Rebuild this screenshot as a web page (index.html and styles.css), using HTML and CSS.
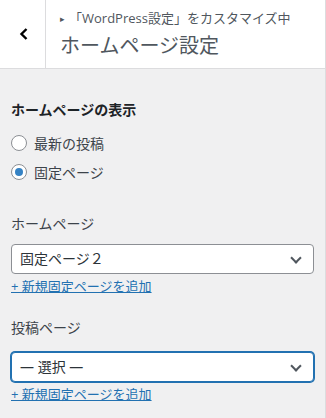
FILE: index.html
```html
<!DOCTYPE html>
<html lang="ja">
<head>
  <meta charset="UTF-8" />
  <title>ホームページ設定</title>
  <link rel="stylesheet" href="styles.css">
</head>
<body>
  <div class="panel">
    <div class="panel-header">
      <button class="back" aria-label="戻る">
        <svg width="10" height="14" viewBox="0 0 10 14"><polyline points="7.5,2 2.5,7 7.5,12" fill="none" stroke="#000" stroke-width="2.4"/></svg>
      </button>
      <div class="titles">
        <div class="crumb"><span class="arrow">&#9656;</span>「WordPress設定」をカスタマイズ中</div>
        <h2 class="title">ホームページ設定</h2>
      </div>
    </div>

    <div class="section">
      <h3 class="label heading">ホームページの表示</h3>
      <label class="radio"><span class="dot"></span>最新の投稿</label>
      <label class="radio"><span class="dot checked"></span>固定ページ</label>
    </div>

    <div class="section">
      <h3 class="label front">ホームページ</h3>
      <div class="select">固定ページ２<span class="caret"></span></div>
      <a class="add" href="#">+ 新規固定ページを追加</a>
    </div>

    <div class="section">
      <h3 class="label posts">投稿ページ</h3>
      <div class="select focus">— 選択 —<span class="caret"></span></div>
      <a class="add" href="#">+ 新規固定ページを追加</a>
    </div>
  </div>
</body>
</html>
```

FILE: styles.css
```css
body {
  margin: 0;
  background: #f0f0f1;
  font-family: "Open Sans", "Noto Sans CJK JP", sans-serif;
  color: #1d2327;
  font-size: 13px;
}

.panel {
  width: 325px;
  height: 418px;
  border-right: 1px solid #dcdcde;
  overflow: hidden;
}

.panel-header {
  display: flex;
  height: 68px;
  background: #fff;
  border-bottom: 1px solid #dcdcde;
}

.back {
  width: 46px;
  border: none;
  border-right: 1px solid #dcdcde;
  background: #fff;
  padding: 0 0 0 2px;
  display: flex;
  align-items: center;
  justify-content: center;
}

.titles {
  padding: 8px 0 0 14px;
  color: #50575e;
}

.crumb {
  font-size: 13px;
  line-height: 20px;
}

.arrow {
  font-size: 9px;
  margin-right: 4px;
  position: relative;
  top: -1px;
}

.title {
  margin: 3px 0 0;
  font-size: 20px;
  font-weight: 400;
  line-height: 26px;
}

.section {
  padding: 0 11px;
}

.label {
  margin: 0;
  font-size: 14px;
  line-height: 20px;
  font-weight: 400;
  color: #3c434a;
}

.label.heading {
  font-weight: 600;
  color: #1d2327;
  padding-top: 31px;
  margin-bottom: 8px;
}

.label.front {
  padding-top: 28px;
  margin-bottom: 10px;
}

.label.posts {
  padding-top: 23px;
  margin-bottom: 14px;
}

.radio {
  display: flex;
  align-items: center;
  gap: 7px;
  height: 29px;
  font-size: 14px;
  color: #3c434a;
}

.dot {
  width: 14px;
  height: 14px;
  border: 1px solid #8c8f94;
  border-radius: 50%;
  background: #fff;
  display: flex;
  align-items: center;
  justify-content: center;
}

.dot.checked::after {
  content: "";
  width: 8px;
  height: 8px;
  border-radius: 50%;
  background: #3582c4;
}

.select {
  position: relative;
  height: 28px;
  line-height: 28px;
  border: 1px solid #8c8f94;
  border-radius: 4px;
  background: #fff;
  padding-left: 8px;
  font-size: 14px;
  color: #2c3338;
}

.select.focus {
  border-color: #2271b1;
  box-shadow: 0 0 0 1px #2271b1;
}

.caret {
  position: absolute;
  right: 13px;
  top: 9px;
  width: 6px;
  height: 6px;
  border-right: 2px solid #50575e;
  border-bottom: 2px solid #50575e;
  transform: rotate(45deg);
}

.add {
  display: inline-block;
  margin-top: 4px;
  font-size: 13px;
  line-height: 16px;
  color: #2271b1;
  text-decoration: underline;
}
```
